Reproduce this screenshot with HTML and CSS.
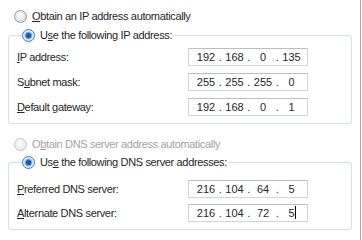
FILE: index.html
```html
<!DOCTYPE html>
<html>
<head>
<meta charset="utf-8">
<link rel="stylesheet" href="styles.css">
</head>
<body>
<div class="dialog">
  <div class="radio-row first">
    <span class="radio"></span>
    <span class="txt"><u>O</u>btain an IP address automatically</span>
  </div>
  <fieldset class="group g1">
    <legend class="radio-row">
      <span class="radio checked"></span>
      <span class="txt">U<u>s</u>e the following IP address:</span>
    </legend>
    <div class="rows r1">
      <div class="field-row">
        <span class="lbl"><u>I</u>P address:</span>
        <div class="ip"><span class="oct">192</span><span class="dot">.</span><span class="oct">168</span><span class="dot">.</span><span class="oct">0</span><span class="dot">.</span><span class="oct">135</span></div>
      </div>
      <div class="field-row">
        <span class="lbl">S<u>u</u>bnet mask:</span>
        <div class="ip"><span class="oct">255</span><span class="dot">.</span><span class="oct">255</span><span class="dot">.</span><span class="oct">255</span><span class="dot">.</span><span class="oct">0</span></div>
      </div>
      <div class="field-row">
        <span class="lbl"><u>D</u>efault gateway:</span>
        <div class="ip"><span class="oct">192</span><span class="dot">.</span><span class="oct">168</span><span class="dot">.</span><span class="oct">0</span><span class="dot">.</span><span class="oct">1</span></div>
      </div>
    </div>
  </fieldset>
  <div class="radio-row second disabled">
    <span class="radio"></span>
    <span class="txt">O<u>b</u>tain DNS server address automatically</span>
  </div>
  <fieldset class="group g2">
    <legend class="radio-row">
      <span class="radio checked"></span>
      <span class="txt">Us<u>e</u> the following DNS server addresses:</span>
    </legend>
    <div class="rows r2">
      <div class="field-row">
        <span class="lbl"><u>P</u>referred DNS server:</span>
        <div class="ip"><span class="oct">216</span><span class="dot">.</span><span class="oct">104</span><span class="dot">.</span><span class="oct">64</span><span class="dot">.</span><span class="oct">5</span></div>
      </div>
      <div class="field-row">
        <span class="lbl"><u>A</u>lternate DNS server:</span>
        <div class="ip"><span class="oct">216</span><span class="dot">.</span><span class="oct">104</span><span class="dot">.</span><span class="oct">72</span><span class="dot">.</span><span class="oct caret-oct">5<span class="caret"></span></span></div>
      </div>
    </div>
  </fieldset>
</div>
</body>
</html>
```
FILE: styles.css
```css
* { box-sizing: border-box; }
html, body { margin: 0; padding: 0; }
body {
  width: 362px;
  height: 240px;
  overflow: hidden;
  background: #ffffff;
  font-family: "Liberation Sans", Arial, sans-serif;
  font-size: 11px;
  letter-spacing: -0.35px;
  color: #262626;
}
u { text-decoration: underline; text-underline-offset: 1px; }

.dialog {
  width: 361px;
  height: 240px;
  padding: 9px 0 0 8px;
  border-right: 1px solid #a8a8a8;
}

.radio-row {
  display: flex;
  align-items: center;
  gap: 5px;
  height: 14px;
  line-height: 14px;
}
.radio-row.first { padding-left: 6px; }
.radio-row.second { padding-left: 6px; margin-top: 13px; }
.radio-row.disabled { color: #a2a2a2; }

.radio {
  width: 13px;
  height: 13px;
  border-radius: 50%;
  border: 1px solid #9a9c9e;
  background: radial-gradient(circle at 45% 40%, #ffffff 0%, #e8e8e8 45%, #cfcfcf 100%);
  flex: none;
  position: relative;
}
.disabled .radio {
  border-color: #c6c6c6;
  background: radial-gradient(circle at 45% 40%, #ffffff 0%, #f0f0f0 50%, #e2e2e2 100%);
}
.radio.checked {
  border-color: #3c7fb1;
  background: radial-gradient(circle, #1a4f9c 0%, #1f62b4 28%, #6ea3d4 40%, #dbe9f5 55%, #f4f8fb 100%);
}

.group {
  margin: 0;
  border: 1px solid #d5dfe5;
  border-radius: 3px;
  width: 344px;
  padding: 0 0 7px 8px;
}
.g1 { margin-top: 5px; }
.g2 { margin-top: 4px; padding-bottom: 7px; }
.group legend {
  padding: 0 1px 0 0;
  margin-left: 5px;
}

.rows { display: flex; flex-direction: column; }
.r1 { margin-top: 6px; gap: 7px; }
.r2 { margin-top: 11px; gap: 6px; }

.field-row {
  display: flex;
  align-items: center;
  height: 18px;
}
.lbl { width: 171px; flex: none; }

.ip {
  width: 120px;
  height: 18px;
  border: 1px solid #d0d5da;
  border-top-color: #b9bec3;
  display: flex;
  align-items: center;
  padding-left: 5.5px;
  line-height: 14px;
  letter-spacing: 0;
}
.oct { width: 23px; text-align: center; flex: none; }
.dot { width: 5.5px; text-align: center; flex: none; }
.caret-oct { position: relative; }
.caret {
  position: absolute;
  top: 0;
  right: 7px;
  width: 1px;
  height: 13px;
  background: #000;
}
```
